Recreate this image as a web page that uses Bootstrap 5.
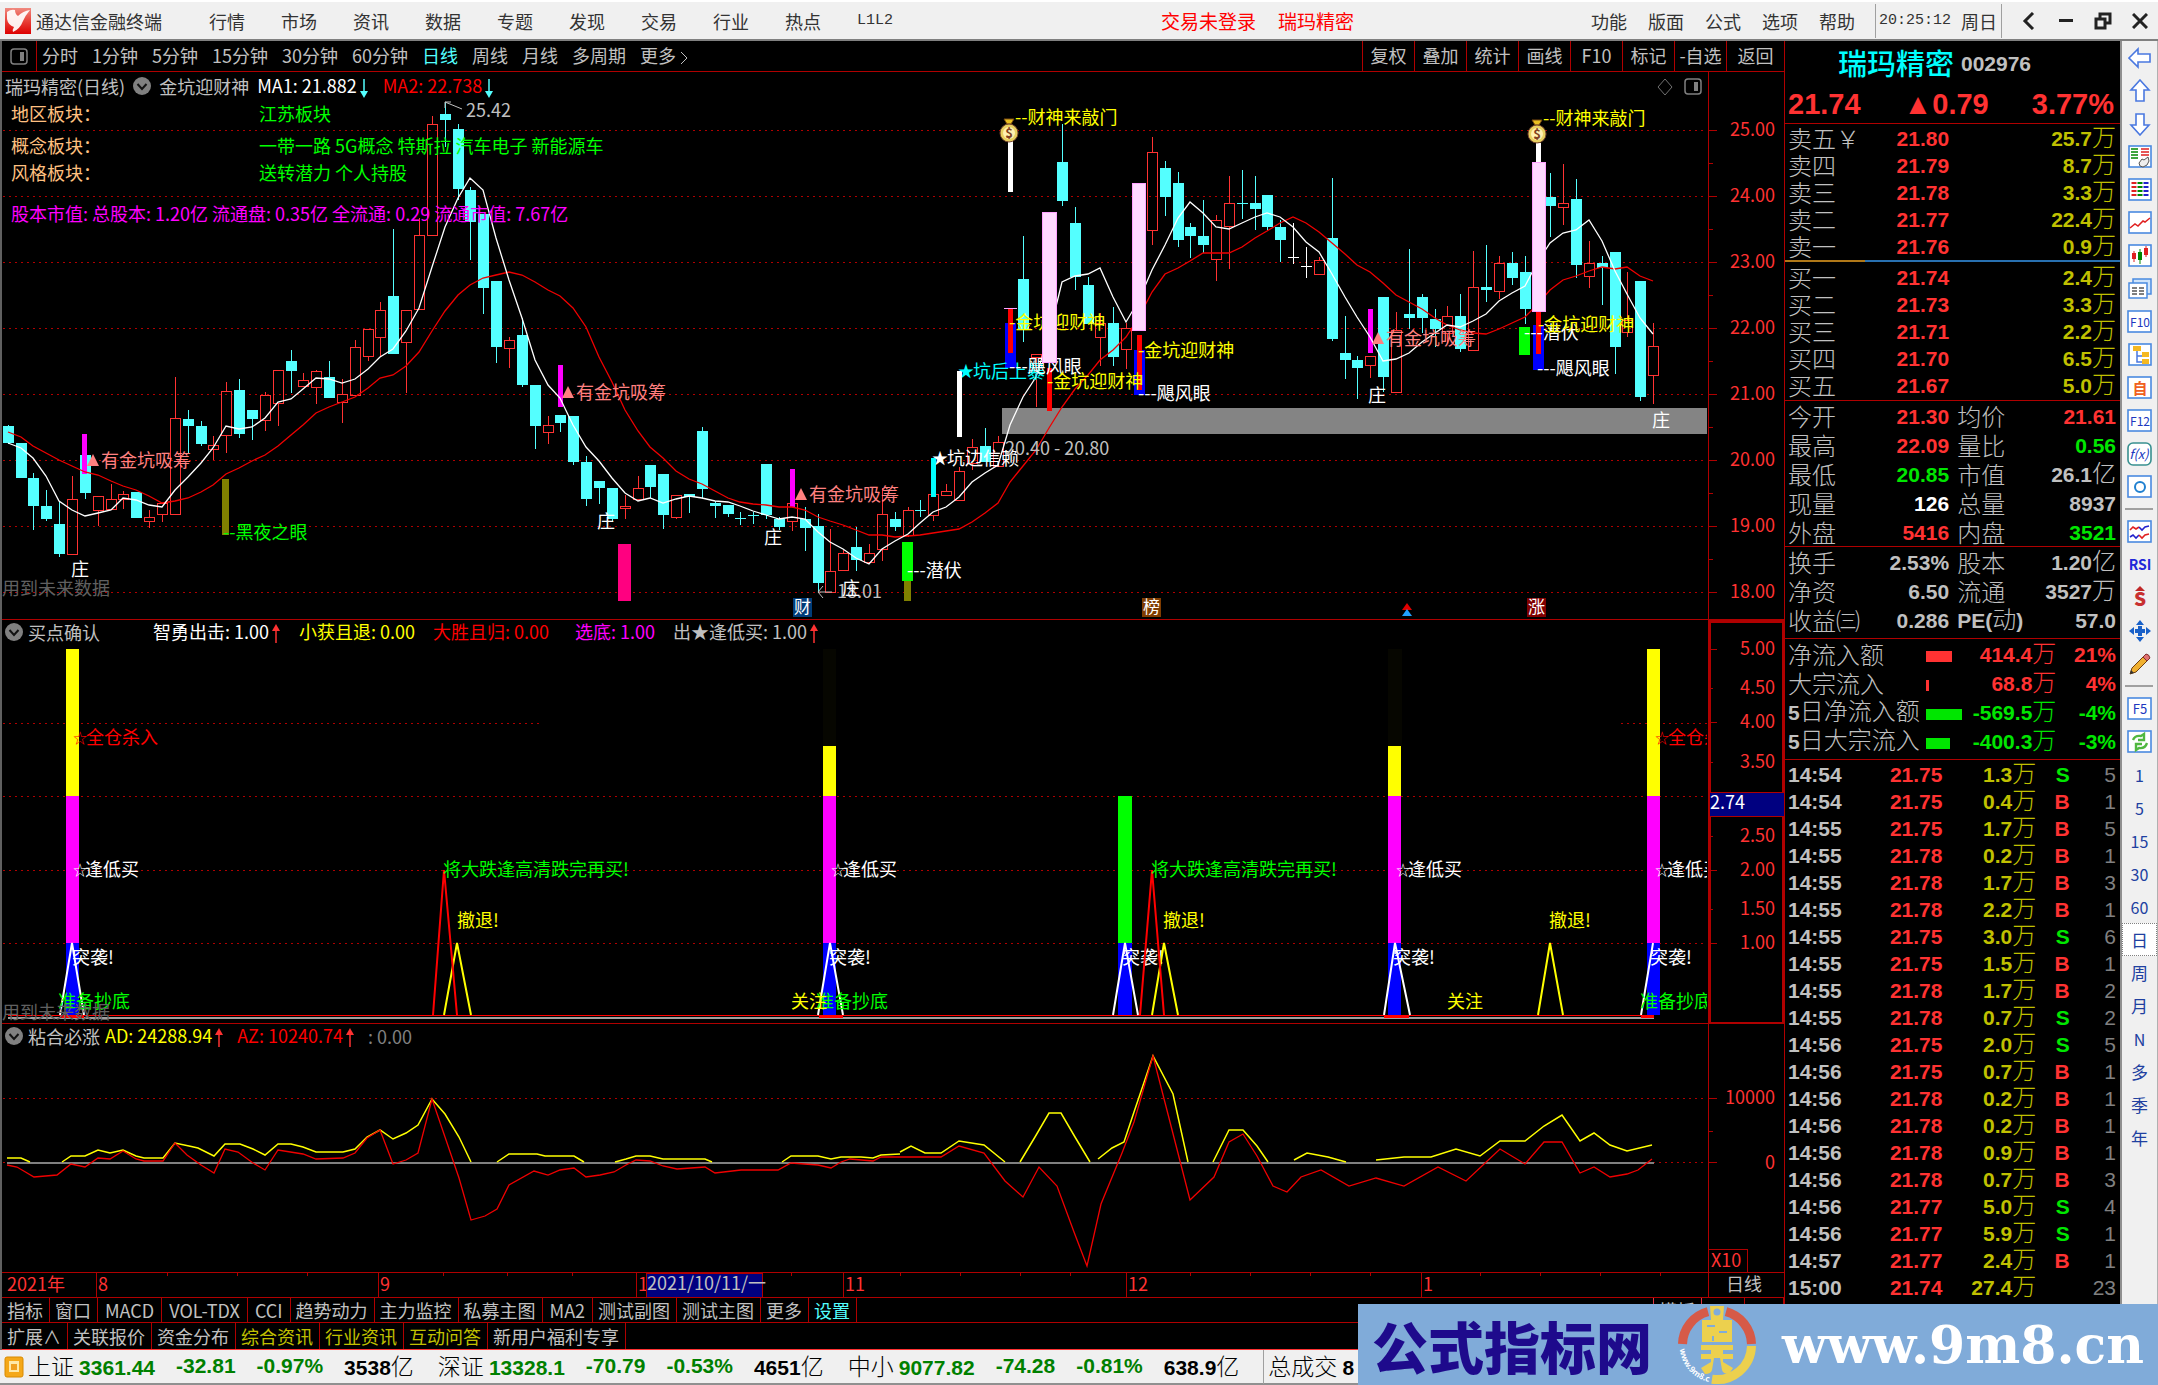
<!DOCTYPE html>
<html lang="zh-CN">
<head>
<meta charset="utf-8">
<meta name="viewport" content="width=device-width, initial-scale=1">
<title>通达信金融终端</title>
<link href="https://cdn.jsdelivr.net/npm/bootstrap@5.3.0/dist/css/bootstrap.min.css" rel="stylesheet">
<style>
:root{--line:#b00000;--up:#ff3232;--down:#00e600;--txt:#c0c0c0;--vol:#c0c000}
body{background:#000;color:var(--txt);font-family:"Noto Sans CJK SC",sans-serif;font-size:18px;font-weight:400;line-height:24px}
a{color:inherit;text-decoration:none}
button{font:inherit;color:inherit;background:none;border:0;padding:0}
.titlebar{background:#f0f0f0;color:#333;height:41px;border-top:2px solid #fff;border-bottom:2px solid #808080;padding-left:5px}
.appname{margin-left:5px}
.titlebar nav{gap:36px;margin-left:47px}
.notice{color:#f00;font-size:19px;gap:22px;margin-left:268px}
.opts{gap:21px}
.mono{font-family:"Liberation Mono","Noto Sans CJK SC",monospace;font-size:15px}
.vsep{width:1px;height:34px;background:#a0a0a0}
.clock{gap:10px;padding:0 4px 0 3px}
.winbtn{width:37px;height:36px;display:flex;align-items:center;justify-content:center}
.workspace{border-left:2px solid #606060;min-width:0}
.periods{height:31px;border-bottom:1px solid var(--line);line-height:29px}
.periods .pane-toggle{width:35px;height:30px;border-right:1px solid var(--line)}
.period-list{gap:14px;padding-left:5px}
.tools a{border-left:1px solid var(--line);width:52px;text-align:center;height:30px}
.tools a:last-child{width:58px}
.pane svg.plot{display:block;width:100%;height:auto}
.legend{top:0;left:3px;gap:5px;line-height:22px;white-space:nowrap}
.legend-main{top:2px;gap:8px}
.legend .group{gap:18px}
.white{color:#fff}.yellow{color:#ff0}.mag{color:#f0f}.redtxt{color:#f00}.aqua{color:#54ffff}.olive{color:var(--vol)}
.tabs a{border-right:1px solid var(--line);padding:0 6px 0 5px}
.tabs a.latin{padding:0 7px}
.tabs{border-top:1px solid var(--line);white-space:nowrap}
.tabs-one{height:25px;line-height:24px}
.tabs-two{height:28px;line-height:26px;border-bottom:1px solid var(--up)}
.quote{width:336px;border-left:1px solid var(--line);flex:none}
.quote table{width:100%;table-layout:fixed;border-collapse:collapse;font-size:24px;line-height:20px}
.quote td,.quote th{padding:0;white-space:nowrap;font-weight:300;overflow:visible}
.quote th{padding-left:3px}
.quote .val{text-align:right}
.quote b,.status b{font-family:"Liberation Sans",sans-serif;font-size:21px;font-weight:700}
.book tr,.trades tr{height:27px}
.stats tr,.flows tr{height:29px}
.edge{padding-right:4px!important}
.qhead{height:83px;border-bottom:1px solid var(--line)}
.qname{font-size:29px;font-weight:500;line-height:38px;gap:7px;padding-right:36px}
.qprice{font-family:"Liberation Sans",sans-serif;font-size:29px;font-weight:700;line-height:42px;padding:0 6px 0 3px}
.split{height:2px;margin:1px 0;background:linear-gradient(90deg,#b07818 24%,#2870b0 24%)}
.bids{padding-bottom:2px}
.rule-top{border-top:1px solid var(--line)}
.up{color:var(--up)}.down{color:var(--down)}.dim{color:#808080}
.flowbar{display:inline-block;height:11px;background:currentColor;vertical-align:middle}
.rail{width:38px;background:#f0f0f0;border-left:2px solid #909090;border-right:1px solid #b0b0b0;flex:none;color:#2040a0;font-size:17px}
.rail a{height:33px;display:flex;align-items:center;justify-content:center}
.rail hr{margin:5px 3px;border-top:2px solid #a0a0a0;opacity:1;width:28px}
.rail .chosen{background:#fff;border:1px dotted #808080}
.rail .num{font-size:16px}
.status{background:#f0f0f0;color:#000;height:35px;border-bottom:2px solid #909090;font-size:23px;font-weight:300;line-height:33px;white-space:nowrap;padding-left:4px}
.status .idx{gap:21px;margin-right:24px}
.status b{color:#008000}
.status .blk{color:#000}
.brand{right:0;bottom:0;width:800px;height:81px;background:#80abd9;color:#fff;padding:0 14px}
.brand .cn{font-size:56px;font-weight:900;line-height:81px;color:#1e0a8c}
.brand .url{font-family:"DejaVu Serif",serif;font-weight:700;font-size:52px;line-height:81px}
svg text{font-family:"Noto Sans CJK SC",sans-serif}
</style>
<script src="https://cdn.jsdelivr.net/npm/bootstrap@5.3.0/dist/js/bootstrap.bundle.min.js"></script>
</head>
<body>
<div class="position-relative d-flex flex-column min-vh-100">
<header class="titlebar d-flex align-items-center">
  <svg width="26" height="26" viewBox="0 0 26 26"><defs><linearGradient id="lg" x2="0" y2="1"><stop offset="0" stop-color="#f08a80"/><stop offset=".5" stop-color="#e84038"/><stop offset="1" stop-color="#d00"/></linearGradient></defs><rect width="26" height="26" fill="url(#lg)"/><path d="M2 4q4-3 8-2 0 4 3 6 5-5 12-6-5 6-7 11-3 8-10 11-1-2 1-5-6-2-7-8 0-4 0-7z" fill="#fff" opacity=".92"/></svg>
  <span class="appname">通达信金融终端</span>
  <nav class="d-flex align-items-center"><a href="#">行情</a><a href="#">市场</a><a href="#">资讯</a><a href="#">数据</a><a href="#">专题</a><a href="#">发现</a><a href="#">交易</a><a href="#">行业</a><a href="#">热点</a><a href="#" class="mono">L1L2</a></nav>
  <div class="notice d-flex"><a href="#">交易未登录</a><a href="#">瑞玛精密</a></div>
  <div class="ms-auto d-flex align-items-center">
    <div class="opts d-flex pe-3 me-1"><a href="#">功能</a><a href="#">版面</a><a href="#">公式</a><a href="#">选项</a><a href="#">帮助</a></div>
    <span class="vsep"></span>
    <div class="clock d-flex align-items-center"><span class="mono">20:25:12</span><span>周日</span></div>
    <span class="vsep me-2"></span>
    <button class="winbtn" aria-label="back"><svg width="14" height="18" fill="none" stroke="#222" stroke-width="3"><path d="M11 1L3 9l8 8"/></svg></button>
    <button class="winbtn" aria-label="minimize"><svg width="14" height="4"><rect width="14" height="3" fill="#222"/></svg></button>
    <button class="winbtn" aria-label="restore"><svg width="18" height="18" fill="none" stroke="#222" stroke-width="3"><path d="M6 6V2h10v9h-4M2 7h9v9H2z"/></svg></button>
    <button class="winbtn" aria-label="close"><svg width="16" height="16" fill="none" stroke="#222" stroke-width="3"><path d="M1 1l14 14M15 1L1 15"/></svg></button>
  </div>
</header>

<main class="d-flex">
<section class="workspace flex-grow-1">
  <div class="periods d-flex">
    <button class="pane-toggle d-flex align-items-center justify-content-center" aria-label="pane"><svg width="18" height="17"><rect x="1" y="1" width="16" height="15" rx="3" fill="none" stroke="#808080" stroke-width="1.5"/><rect x="10" y="4" width="4" height="9" fill="#808080"/></svg></button>
    <nav class="period-list d-flex"><a href="#">分时</a><a href="#">1分钟</a><a href="#">5分钟</a><a href="#">15分钟</a><a href="#">30分钟</a><a href="#">60分钟</a><a href="#" class="aqua">日线</a><a href="#">周线</a><a href="#">月线</a><a href="#">多周期</a><a href="#">更多 <svg width="8" height="14" fill="none" stroke="#c0c0c0"><path d="M1 1l6 6-6 6"/></svg></a></nav>
    <nav class="tools d-flex ms-auto"><a href="#">复权</a><a href="#">叠加</a><a href="#">统计</a><a href="#">画线</a><a href="#">F10</a><a href="#">标记</a><a href="#">-自选</a><a href="#">返回</a></nav>
  </div>

  <div class="pane position-relative">
    <div class="legend legend-main position-absolute d-flex align-items-center">
      <span>瑞玛精密(日线)</span>
      <svg width="18" height="18"><use href="#fold"/></svg>
      <span>金坑迎财神</span>
      <span class="white">MA1: 21.882<svg width="14" height="20"><use href="#dn"/></svg></span>
      <span class="redtxt ms-1">MA2: 22.738<svg width="14" height="20"><use href="#dn"/></svg></span>
    </div>
    <svg class="plot" id="kline" viewBox="2 72 1782 548"></svg>
  </div>

  <div class="pane position-relative">
    <div class="legend position-absolute d-flex align-items-center">
      <svg width="18" height="18"><use href="#fold"/></svg>
      <span>买点确认</span>
      <span class="group d-flex ms-5"><span class="white">智勇出击: 1.00<svg width="12" height="20"><use href="#upa"/></svg></span><span class="yellow">小获且退: 0.00</span><span class="redtxt">大胜且归: 0.00</span><span class="mag ms-2">选底: 1.00</span><span>出★逢低买: 1.00<svg width="12" height="20"><use href="#upa"/></svg></span></span>
    </div>
    <svg class="plot" id="signal" viewBox="2 620 1782 404"></svg>
  </div>

  <div class="pane position-relative">
    <div class="legend position-absolute d-flex align-items-center">
      <svg width="18" height="18"><use href="#fold"/></svg>
      <span>粘合必涨</span>
      <span class="yellow">AD: 24288.94<svg width="12" height="20"><use href="#upa"/></svg></span>
      <span class="redtxt ms-2">AZ: 10240.74<svg width="12" height="20"><use href="#upa"/></svg></span>
      <span class="dim ms-2">: 0.00</span>
    </div>
    <svg class="plot" id="adaz" viewBox="2 1024 1782 273"></svg>
  </div>

  <nav class="tabs tabs-one d-flex"><a href="#">指标</a><a href="#">窗口</a><a href="#" class="latin">MACD</a><a href="#" class="latin">VOL-TDX</a><a href="#" class="latin">CCI</a><a href="#">趋势动力</a><a href="#">主力监控</a><a href="#">私募主图</a><a href="#" class="latin">MA2</a><a href="#">测试副图</a><a href="#">测试主图</a><a href="#">更多</a><a href="#" class="aqua">设置</a><a href="#" class="ms-auto border-start border-danger">模板</a><a href="#" class="px-3">+</a><a href="#" class="px-3">-</a></nav>
  <nav class="tabs tabs-two d-flex"><a href="#">扩展∧</a><a href="#">关联报价</a><a href="#">资金分布</a><a href="#" class="olive">综合资讯</a><a href="#" class="olive">行业资讯</a><a href="#" class="olive">互动问答</a><a href="#">新用户福利专享</a></nav>
</section>

<aside class="quote">
  <div class="qhead">
    <div class="qname d-flex justify-content-center align-items-center"><span style="color:#00ffff">瑞玛精密</span><b class="pt-1">002976</b></div>
    <div class="qprice up d-flex justify-content-between"><span>21.74</span><span>▲0.79</span><span>3.77%</span></div>
  </div>
  <table class="book"><colgroup><col style="width:30%"><col style="width:19%"><col></colgroup><tbody id="asks"></tbody></table>
  <div class="split"></div>
  <div class="bids"><table class="book"><colgroup><col style="width:30%"><col style="width:19%"><col></colgroup><tbody id="bids"></tbody></table></div>
  <div class="rule-top">
  <table class="stats"><colgroup><col style="width:25%"><col style="width:24%"><col style="width:24%"><col></colgroup><tbody>
    <tr><th>今开</th><td class="val up"><b>21.30</b></td><th class="ps-2">均价</th><td class="val up edge"><b>21.61</b></td></tr>
    <tr><th>最高</th><td class="val up"><b>22.09</b></td><th class="ps-2">量比</th><td class="val down edge"><b>0.56</b></td></tr>
    <tr><th>最低</th><td class="val down"><b>20.85</b></td><th class="ps-2">市值</th><td class="val edge"><b>26.1</b>亿</td></tr>
    <tr><th>现量</th><td class="val white"><b>126</b></td><th class="ps-2">总量</th><td class="val edge"><b>8937</b></td></tr>
    <tr><th>外盘</th><td class="val up"><b>5416</b></td><th class="ps-2">内盘</th><td class="val down edge"><b>3521</b></td></tr>
  </tbody></table></div>
  <div class="rule-top pb-1">
  <table class="stats"><colgroup><col style="width:25%"><col style="width:24%"><col style="width:24%"><col></colgroup><tbody>
    <tr><th>换手</th><td class="val"><b>2.53%</b></td><th class="ps-2">股本</th><td class="val edge"><b>1.20</b>亿</td></tr>
    <tr><th>净资</th><td class="val"><b>6.50</b></td><th class="ps-2">流通</th><td class="val edge"><b>3527</b>万</td></tr>
    <tr><th>收益㈢</th><td class="val"><b>0.286</b></td><th class="ps-2"><b>PE(</b>动<b>)</b></th><td class="val edge"><b>57.0</b></td></tr>
  </tbody></table></div>
  <div class="rule-top pb-1">
  <table class="flows"><colgroup><col style="width:42%"><col style="width:12%"><col style="width:27%"><col></colgroup><tbody>
    <tr class="up"><th style="color:var(--txt)">净流入额</th><td><i class="flowbar" style="width:26px"></i></td><td class="val"><b>414.4</b>万</td><td class="val edge"><b>21%</b></td></tr>
    <tr class="up"><th style="color:var(--txt)">大宗流入</th><td><i class="flowbar" style="width:3px"></i></td><td class="val"><b>68.8</b>万</td><td class="val edge"><b>4%</b></td></tr>
    <tr class="down"><th style="color:var(--txt)"><b>5</b>日净流入额</th><td><i class="flowbar" style="width:36px"></i></td><td class="val"><b>-569.5</b>万</td><td class="val edge"><b>-4%</b></td></tr>
    <tr class="down"><th style="color:var(--txt)"><b>5</b>日大宗流入</th><td><i class="flowbar" style="width:24px"></i></td><td class="val"><b>-400.3</b>万</td><td class="val edge"><b>-3%</b></td></tr>
  </tbody></table></div>
  <div class="rule-top">
  <table class="trades"><colgroup><col style="width:25%"><col style="width:22%"><col style="width:28%"><col style="width:10%"><col></colgroup><tbody id="trades"></tbody></table></div>
</aside>

<nav class="rail">
  <a href="#" aria-label="左"><svg width="24" height="22" fill="#fff" stroke="#4a78e0" stroke-width="1.6"><path d="M1 11L10 2v5h12v8H10v5z"/></svg></a>
  <a href="#" aria-label="上"><svg width="22" height="24" fill="#fff" stroke="#4a78e0" stroke-width="1.6"><path d="M11 1l9 10h-5v11H7V11H2z"/></svg></a>
  <a href="#" aria-label="下"><svg width="22" height="24" fill="#fff" stroke="#4a78e0" stroke-width="1.6"><path d="M11 23l9-10h-5V2H7v11H2z"/></svg></a>
  <a href="#" aria-label="定制"><svg width="24" height="24"><use href="#tile"/><path d="M3 4h7M3 7h7M3 10h7M3 13h7" stroke="#080" stroke-width="1.5"/><path d="M13 4h8M13 7h8M13 10h8" stroke="#e02020" stroke-width="1.5"/><path d="M20 12l-4 3-2-1-3 4q0 4 4 4 5-1 6-6z" fill="#eee" stroke="#555"/></svg></a>
  <a href="#" aria-label="报价"><svg width="24" height="24"><use href="#tile"/><g stroke-width="5" stroke-dasharray="2 2"><path d="M6 4v16" stroke="#e02020"/><path d="M12 4v16" stroke="#080"/><path d="M18 4v16" stroke="#22c"/></g></svg></a>
  <a href="#" aria-label="分时"><svg width="24" height="24"><use href="#tile"/><path d="M2 17l5-4 3 2 5-5 2 1 5-4" fill="none" stroke="#e02020" stroke-width="1.5"/></svg></a>
  <a href="#" aria-label="K线"><svg width="24" height="24"><use href="#tile"/><path d="M6 7v11M18 2v11" stroke="#e02020"/><path d="M12 5v15" stroke="#080"/><path d="M4 9h4v6H4zM16 4h4v7h-4z" fill="#e02020"/><path d="M10 8h4v8h-4z" fill="#080"/></svg></a>
  <a href="#" aria-label="资料"><svg width="26" height="24"><path d="M6 2h18v15H6z" fill="#cfe4fa" stroke="#4a8ae0" stroke-width="1.5"/><path d="M2 6h18v15H2z" fill="#fff" stroke="#4a8ae0" stroke-width="1.5"/><path d="M5 11h5M12 11h5M5 14h5M12 14h5M5 17h5M12 17h5" stroke="#555" stroke-width="1.5"/></svg></a>
  <a href="#"><svg width="26" height="24"><use href="#tilew"/><text x="13" y="17" font-size="12" text-anchor="middle" fill="#2038c0">F10</text></svg></a>
  <a href="#" aria-label="树"><svg width="24" height="24"><use href="#tile"/><path d="M9 8v11h6M9 13h6" fill="none" stroke="#4a78e0" stroke-width="1.5"/><path d="M5 3h8v5H5zM14 9h7v5h-7zM14 16h7v5h-7z" fill="#f5b820"/></svg></a>
  <a href="#"><svg width="26" height="24"><use href="#tilew"/><text x="13" y="18" font-size="15" font-weight="700" text-anchor="middle" fill="#f06020">自</text></svg></a>
  <a href="#"><svg width="26" height="24"><use href="#tilew"/><text x="13" y="17" font-size="12" text-anchor="middle" fill="#2038c0">F12</text></svg></a>
  <a href="#"><svg width="26" height="24"><rect x="1" y="1" width="23" height="22" rx="5" fill="#fff" stroke="#389090" stroke-width="1.6"/><text x="12" y="17" font-size="13" font-style="italic" text-anchor="middle" fill="#2038c0">f(x)</text></svg></a>
  <a href="#" aria-label="圆"><svg width="26" height="24"><use href="#tilew"/><circle cx="13" cy="12" r="5" fill="none" stroke="#2080d0" stroke-width="2"/></svg></a>
  <hr>
  <a href="#" aria-label="指标"><svg width="26" height="24"><use href="#tilew"/><path d="M3 10l3-3 3 2 3-2" fill="none" stroke="#e02020" stroke-width="1.6"/><path d="M12 7l3 3 3-3 4-1" fill="none" stroke="#22c" stroke-width="1.6"/><path d="M3 17l3-2 3 3 3-3" fill="none" stroke="#22c" stroke-width="1.6"/><path d="M12 15l3 3 3-3 4-1" fill="none" stroke="#e02020" stroke-width="1.6"/></svg></a>
  <a href="#"><svg width="28" height="24"><text x="14" y="17" font-size="14" font-weight="700" text-anchor="middle" fill="#2028d8">RSI</text></svg></a>
  <a href="#"><svg width="22" height="30"><path d="M11 3l5 5H6z" fill="#c02828"/><text x="11" y="23" font-size="19" font-weight="900" text-anchor="middle" fill="#c83030">S</text></svg></a>
  <a href="#" aria-label="移动"><svg width="24" height="24" fill="#1860c8"><path d="M12 1l4 5H8zM12 23l4-5H8zM1 12l5-4v8zM23 12l-5-4v8z"/><path d="M12 7v10M7 12h10" stroke="#1860c8" stroke-width="4"/></svg></a>
  <a href="#" aria-label="画笔"><svg width="24" height="24"><path d="M2 22l2-6L15 5l4 4L8 20z" fill="#f0b030" stroke="#704010"/><path d="M15 5l3-3q3 0 4 4l-3 3z" fill="#e07070" stroke="#803030"/><path d="M2 22l1-4 3 3z" fill="#333"/></svg></a>
  <hr>
  <a href="#"><svg width="26" height="24"><use href="#tilew"/><text x="13" y="17" font-size="13" text-anchor="middle" fill="#2038c0">F5</text></svg></a>
  <a href="#" aria-label="刷新"><svg width="26" height="24"><use href="#tilew"/><path d="M6 10q2-5 8-4l3-2v6h-6M20 13q-2 6-8 5l-3 2v-6h6" fill="none" stroke="#50b840" stroke-width="2.4"/></svg></a>
  <a href="#" class="num">1</a><a href="#" class="num">5</a><a href="#" class="num">15</a><a href="#" class="num">30</a><a href="#" class="num">60</a>
  <a href="#" class="chosen">日</a><a href="#">周</a><a href="#">月</a><a href="#" class="num">N</a><a href="#">多</a><a href="#">季</a><a href="#">年</a>
</nav>
</main>

<footer class="status d-flex align-items-center">
  <svg width="20" height="22" class="me-1"><rect x="1" y="1" width="18" height="20" rx="2" fill="#f5a818" stroke="#d88a00"/><rect x="5" y="5" width="10" height="11" fill="#ffe9a8"/><rect x="7" y="8" width="6" height="6" fill="#f0a020"/></svg>
  <div class="idx d-flex"><span>上证 <b>3361.44</b></span><b>-32.81</b><b>-0.97%</b><span><b class="blk">3538</b>亿</span></div>
  <div class="idx d-flex"><span>深证 <b>13328.1</b></span><b>-70.79</b><b>-0.53%</b><span><b class="blk">4651</b>亿</span></div>
  <div class="idx d-flex"><span>中小 <b>9077.82</b></span><b>-74.28</b><b>-0.81%</b><span><b class="blk">638.9</b>亿</span></div>
  <span class="vsep me-1"></span><span>总成交 <b class="blk">8</b></span>
</footer>

<div class="brand position-absolute d-flex align-items-center justify-content-between">
  <span class="cn">公式指标网</span>
  <svg width="80" height="80" viewBox="-40 -40 80 80"><path d="M-34.500-1A34.500 34.500 0 0 1-9-33.300M9-33.300A34.500 34.500 0 0 1 34.500-1" fill="none" stroke="#d65a48" stroke-width="9"/><path d="M34.500 1A34.500 34.500 0 0 1-5 34.200" fill="none" stroke="#ecd04e" stroke-width="9"/><path id="ring" d="M-37 4A37 37 0 0 0-8 37" fill="none"/><text font-size="8" font-weight="700" fill="#fff"><textPath href="#ring" startOffset="0">www.9m8.cn</textPath></text><g fill="#ecd04e"><path d="M-7-39H7l-1 14h9v22h-30v-22h9z"/><path d="M-16 0h32v5H6v4h10v5H6v3l10 6-4 6q-6 0-7-4L3 13h-6l-2 12q-1 4-7 4l-4-6 10-6v-3h-10v-5h10V5h-10z"/></g><path d="M-10-19h8M2-13h8M-4-9v5" stroke="#80abd9" stroke-width="2"/><circle cy="-33" r="3.500" fill="#80abd9"/></svg>
  <span class="url">www.9m8.cn</span>
</div>
</div>

<svg width="0" height="0" class="position-absolute"><defs>
  <g id="fold"><circle cx="9" cy="9" r="9" fill="#808080"/><path d="M4.500 7l4.500 5 4.500-5" fill="none" stroke="#111" stroke-width="2"/></g>
  <g id="dn"><path d="M7 1v13" stroke="#54ffff" stroke-width="1.500"/><path d="M7 20l-4-7h8z" fill="#54ffff"/></g>
  <g id="upa"><path d="M7 5v14" stroke="#ff3232" stroke-width="1.500"/><path d="M7 0l-4 7h8z" fill="#ff3232"/></g>
  <rect id="tile" x="1" y="1" width="22" height="21" fill="#fff" stroke="#4a8ae0" stroke-width="1.600"/>
  <rect id="tilew" x="1" y="1" width="23" height="21" fill="#fff" stroke="#4a8ae0" stroke-width="1.600"/>
  <g id="bag"><path d="M5 0h10l-3 5h-4z" fill="#e8c020" stroke="#7a4a10"/><circle cx="10" cy="14" r="9" fill="#e8d060" stroke="#7a4a30"/><circle cx="10" cy="14" r="6" fill="#fff0b0"/></g>
</defs></svg>

<script>
const UP='#ff3232',DN='#54ffff',GRID='#b00000';
const esc=s=>s.replace(/&/g,'&amp;');
const rect=(x,y,w,h,f,s)=>`<rect x="${x}" y="${y}" width="${w}" height="${h}" fill="${f}"${s?` stroke="${s}"`:''} shape-rendering="crispEdges"/>`;
const line=(x1,y1,x2,y2,c,e='')=>`<path d="M${x1} ${y1}L${x2} ${y2}" stroke="${c}" fill="none" ${e}/>`;
const text=(x,yc,s,c,size=18,e='')=>`<text x="${x}" y="${Math.round(yc+size*.36)}" font-size="${size}" fill="${c}" ${e}>${esc(s)}</text>`;
const crisp='shape-rendering="crispEdges"';
const dots=(y,a=3,b=1707)=>line(a,y+.5,b,y+.5,GRID,'stroke-dasharray="2 4" '+crisp);
const poly=(pts,c,w=1)=>`<polyline points="${pts.map(p=>p.join()).join(' ')}" fill="none" stroke="${c}" stroke-width="${w}"/>`;
const cx=i=>Math.round(7.7+12.855*i);

/* daily candles: kind (c down, r up, w flat), high, body top, body bottom, low */
const bars=`0c425,426,443,444 1c443,443,478,478 2c473,478,506,530 3c490,506,519,521 4c501,524,554,557 5r476,499,554,554 6c455,455,493,499 7r496,496,510,526 8r484,499,509,509 9r491,494,499,509 10c492,492,518,518 11r510,517,521,528 12r503,503,514,522 13r377,418,514,514 14c410,419,426,453 15c421,426,444,446 16r436,445,449,460 17r382,391,435,453 18c379,390,434,438 19c410,410,419,440 20r392,395,420,431 21r370,370,403,426 22c350,361,371,393 23r373,380,386,386 24r370,371,387,404 25c361,377,398,398 26r379,394,402,423 27r340,347,395,395 28r329,329,356,361 29r302,310,337,357 30c229,296,354,354 31r310,310,342,393 32r218,235,309,309 33r116,124,235,235 34c102,114,120,147 35c124,129,189,200 36c187,190,222,260 37c214,214,288,314 38c281,281,347,363 39r337,340,348,368 40c318,335,385,387 41c385,385,426,449 42r416,425,432,444 43c415,415,423,432 44c416,416,462,465 45c456,462,499,506 46c481,481,488,504 47c488,488,519,521 48r495,506,508,519 49r476,488,499,499 50c465,465,487,498 51c474,474,515,529 52r495,495,517,519 53c494,494,497,513 54c427,431,489,498 55c501,503,506,518 56c505,505,514,517 57c512,518,519,525 58c512,515,516,524 59c464,464,515,519 60c517,519,527,530 61r503,503,521,531 62c507,519,528,551 63c514,526,583,593 64r529,571,592,592 65r550,553,570,570 66c527,547,560,571 67r544,553,562,562 68r488,514,549,561 69c512,519,527,531 70r507,510,535,537 71c500,510,511,517 72r494,494,515,521 73r484,491,495,495 74r467,471,500,500 75r439,447,463,470 76c428,446,462,462 77r436,442,466,466 79c236,279,330,342 80r354,354,357,407 82c124,162,201,206 83c207,223,277,290 84c277,285,324,324 85r313,323,337,366 86c307,323,357,366 87r323,328,349,369 89r137,152,230,245 90c161,168,197,216 91c172,183,240,247 92c223,227,236,258 93c200,236,245,253 94r215,220,259,281 95r176,203,226,269 96c170,203,204,219 97c176,203,209,230 98c195,195,227,230 99c220,227,240,262 100w223,257,258,264 101w247,266,267,278 102r257,260,274,274 103c178,238,339,341 104c316,353,360,379 105c356,360,368,399 106r356,356,365,378 107c297,297,377,392 108r312,330,392,392 109c249,314,318,329 110c294,297,318,333 111c309,319,329,347 112r306,316,333,343 113c294,316,349,352 114r251,287,350,350 115c245,287,290,302 116r256,263,291,299 117c252,263,278,285 118c256,272,309,324 120c173,197,206,237 121r164,203,207,225 122c179,199,265,278 123r241,263,276,288 124c256,263,268,305 125c252,252,347,374 126r272,320,332,337 127c281,281,397,401 128r323,346,375,404`;
const candle=b=>{const m=b.match(/^(\d+)([crw])(.+)$/),x=cx(+m[1]),[h,t,l,lo]=m[3].split(',').map(Number);
  const c=m[2]=='c'?DN:m[2]=='r'?UP:'#fff';
  const wick=m[2]=='r'?line(x+.5,h,x+.5,t,c,crisp)+line(x+.5,l,x+.5,lo,c,crisp):line(x+.5,h,x+.5,lo,c,crisp);
  return wick+(m[2]=='r'?rect(x-4.5,t+.5,10,Math.max(1,l-t),'none',c):rect(x-5,t,11,Math.max(1,l-t),c));};
const ma1=[443,448,458,476,501,510,516,513,510,498,500,505,507,490,477,463,448,426,429,427,418,402,399,389,378,379,383,379,369,357,349,331,308,267,227,198,178,190,238,280,318,360,385,398,425,447,461,478,493,501,498,503,499,496,498,501,502,506,511,515,519,517,519,532,542,549,558,564,549,541,534,523,512,507,497,482,473,465,425,397,377,335,282,276,274,268,297,322,300,270,245,218,202,213,227,229,223,217,213,217,227,242,252,274,297,317,337,361,359,353,342,333,325,327,321,314,301,293,286,263,243,233,230,220,241,271,294,318,334];
const ma2=[432,437,446,453,460,466,472,475,481,486,490,496,503,501,498,492,485,474,468,461,455,446,435,425,413,407,402,397,388,378,375,366,352,331,311,295,285,278,275,272,275,282,290,296,308,327,357,382,410,431,447,458,471,479,484,491,498,502,504,505,507,507,510,517,521,525,530,535,535,537,536,535,533,531,529,522,513,503,482,466,450,428,407,389,375,360,350,337,317,292,274,268,261,253,253,253,247,238,231,223,217,223,232,243,254,265,272,283,295,302,309,318,325,330,333,334,329,323,317,305,290,280,276,271,267,269,267,276,281];
const ORG='#ffc080',LIME='#00ff00',MAG='#ff00ff',YEL='#ffff00',CORAL='#ff8080',GRY='#c0c0c0';
const tri=(x,yc)=>`<path d="M${x} ${yc+5}l6-12 6 12z" fill="${CORAL}"/>`;
let k='';
for(let y=130;y<600;y+=66)k+=dots(y);
k+=rect(1002,408,705,26,'#848484');
k+=bars.split(' ').map(candle).join('');
k+=rect(82,434,5,40,MAG)+rect(558,365,5,42,MAG)+rect(790,469,5,38,MAG)+rect(1368,309,5,44,MAG);
k+=rect(222,479,7,56,'#808000')+rect(618,544,13,57,'#ff0080')+rect(902,542,11,39,'#00ff00')+rect(904,581,7,20,'#808000');
k+=rect(931,458,5,39,'#00ffff')+rect(957,371,5,66,'#fff')+rect(1008,141,5,51,'#fff')+rect(1536,143,5,20,'#fff');
k+=rect(1005,323,11,45,'#0000ff')+rect(1008,309,5,44,'#f00')+rect(1004,308,13,1,'#ffa0ff')+rect(1134,350,11,45,'#0000ff')+rect(1137,335,5,55,'#f00')+rect(1047,368,5,43,'#f00');
k+=rect(1519,327,11,28,'#00ff00')+rect(1533,325,11,45,'#0000ff')+rect(1536,311,5,43,'#f00');
k+=poly(ma2.map((y,i)=>[cx(i),y]),'#f00000',1.3)+poly(ma1.map((y,i)=>[cx(i),y]),'#ffffff',1.3);
k+=text(1009,323,'-金坑迎财神',YEL)+text(1524,333,'---潜伏','#fff')+text(1538,325,'-金坑迎财神',YEL)+text(973,372,'坑后上暴','#00ffff')+text(958,371,'★','#00ffff',16)+text(1009,367,'---飓风眼','#fff');
k+=rect(1042,212,14,150,'#ffd8ff','#ffa0ff')+rect(1132,183,13,147,'#ffd8ff','#ffa0ff')+rect(1532,162,13,149,'#ffd8ff','#ffa0ff');
k+=text(1047,382,'-金坑迎财神',YEL)+text(1138,351,'-金坑迎财神',YEL)+text(1138,394,'---飓风眼','#fff')+text(1537,369,'---飓风眼','#fff');
k+=text(1015,118,'--财神来敲门',YEL)+text(1543,119,'--财神来敲门',YEL);
for(const [x,y] of [[999,119],[1527,120]])k+=`<use href="#bag" x="${x}" y="${y}"/>`+text(x+10,y+14,'$','#804020',13,'text-anchor="middle" font-weight="700"');
k+=text(11,115,'地区板块：',ORG)+text(259,115,'江苏板块',LIME)+text(11,147,'概念板块：',ORG)+text(259,147,'一带一路 5G概念 特斯拉 汽车电子 新能源车',LIME)+text(11,174,'风格板块：',ORG)+text(259,174,'送转潜力 个人持股',LIME)+text(11,215,'股本市值: 总股本: 1.20亿 流通盘: 0.35亿 全流通: 0.29 流通市值: 7.67亿',MAG);
k+=text(466,111,'25.42',GRY)+`<path d="M462 109l-17-7m0 6v-6h6" fill="none" stroke="${GRY}"/>`;
for(const [x,y] of [[87,461],[562,393],[795,495],[1372,339]])k+=tri(x,y)+text(x+14,y,'有金坑吸筹',CORAL);
k+=text(223,533,'--黑夜之眼',LIME)+text(907,571,'---潜伏','#fff')+text(947,459,'坑边信赖','#fff')+text(932,458,'★','#fff',16)+text(1005,449,'20.40 - 20.80',GRY)+text(837,592,'18.01',GRY)+`<path d="M832 592h-14m5-6l-5 6 5 6" fill="none" stroke="${GRY}"/>`;
for(const [x,y] of [[71,570],[597,522],[764,538],[842,589],[1368,396],[1652,421]])k+=text(x,y,'庄','#fff');
k+=text(2,589,'用到未来数据','#606060');
for(const [x,c,s] of [[793,'#003c78','财'],[1142,'#803c00','榜'],[1527,'#800000','涨']])k+=rect(x,598,19,19,c)+text(x+1,607,s,'#fff',17);
k+='<path d="M1407 603l5 7h-10z" fill="#e00000"/><path d="M1407 609l5 7h-10z" fill="#20a0ff"/><path d="M1665 79l7 8-7 8-7-8z" fill="none" stroke="#707070"/><rect x="1685" y="79" width="16" height="15" rx="3" fill="none" stroke="#808080" stroke-width="1.500"/><rect x="1694" y="82" width="4" height="9" fill="#808080"/>';
k+=line(1708.5,72,1708.5,620,GRID,crisp);
for(let i=0;i<8;i++){const y=130+66*i;k+=line(1709,y+.5,1717,y+.5,GRID,crisp)+(i<7?line(1709,y+33.5,1713,y+33.5,GRID,crisp):'')+text(1775,y,(25-i)+'.00',UP,18,'text-anchor="end"');}
k+=line(2,619.5,1784,619.5,GRID,crisp);
kline.innerHTML=k;

/* buy signal pane */
let s='<clipPath id="cp"><rect x="2" y="620" width="1705" height="404"/></clipPath>';
s+=dots(723,3,540)+dots(723,1621)+dots(796)+dots(870)+dots(943);
s+=rect(823,649,13,97,'#060600')+rect(1388,649,14,97,'#060600');
for(const [x,top] of [[66,649],[823,746],[1388,746],[1647,649]])s+=rect(x,top,13,796-top,YEL)+rect(x,796,13,147,MAG)+rect(x,943,13,72,'#0000ff');
s+=rect(1118,796,14,147,LIME)+rect(1118,943,14,72,'#0000ff');
s+=rect(8,1017,1646,2,'#a0a0a0')+rect(8,1015,1646,1,'#f00');
for(const [a,b,c] of [[60,72,84],[818,830,843],[1113,1125,1138],[1384,1395,1410]])s+=poly([[a,1015],[b,943],[c,1015]],'#fff',2);
s+=poly([[1641,1015],[1653,943]],'#fff',2);
for(const [a,w] of [[60,24],[819,24],[1384,25],[1641,13]])s+=rect(a,1015,w,3,'#f00');
for(const x of [72,829,1122,1393,1650])s+=text(x,958,'突袭!','#fff');
for(const [a,b,c] of [[444,457,471],[1152,1164,1178],[1538,1550,1563]])s+=poly([[a,1015],[b,943],[c,1015]],YEL,2);
for(const [a,b,c] of [[433,444,457],[1140,1152,1164]])s+=poly([[a,1015],[b,870],[c,1015]],'#f00',2);
s+='<g clip-path="url(#cp)">';
for(const x of [73,1655])s+=text(x,738,'☆','#f00',14)+text(x+13,738,'全仓杀入','#f00');
for(const x of [73,831,1396,1655])s+=text(x,870,'☆','#fff',14)+text(x+12,870,'逢低买','#fff');
for(const x of [58,816,1640])s+=text(x,1002,'准备抄底',LIME);
s+='</g>';
for(const x of [443,1151])s+=text(x,870,'将大跌逢高清跌完再买!',LIME);
for(const x of [457,1163,1549])s+=text(x,921,'撤退!',YEL);
for(const x of [791,1447])s+=text(x,1002,'关注',YEL);
s+=text(2,1013,'用到未来数据','#606060');
s+=rect(1709,621,74,402,'none',GRID).replace('stroke=','stroke-width="3" stroke=');
[['5.00',649],['4.50',688],['4.00',722],['3.50',762],['2.50',836],['2.00',870],['1.50',909],['1.00',943]].forEach(([t,y])=>{s+=text(1775,y,t,UP,18,'text-anchor="end"')+line(1709,y+.5,1709+(t.endsWith('50')?4:8),y+.5,GRID,crisp)});
s+=rect(1709,792,75,24,'#000080',GRID)+text(1710,803,'2.74','#fff');
s+=line(2,1023.5,1784,1023.5,GRID,crisp);
signal.innerHTML=s;

/* AD / AZ pane */
const sc=(str,kx=1/1.742,oy=1040)=>str.split(' ').map(p=>{const [a,b]=p.split(',').map(Number);return [Math.round(a*kx),Math.round(oy+b/3)]});
let g=dots(1098)+dots(1162)+rect(7,1162,1647,2,'#808080');
g+=['12,354 37,354 53,366','108,366 124,349 148,349 170,330 192,340 215,331 237,348 250,354 284,354 305,309 330,318 345,324 373,349 392,313 418,313 440,328 461,345 484,313 507,313 528,320 550,336 598,336 618,326 640,292 662,270 685,296 708,280 729,256 753,176 775,222 800,290 820,366','866,366 886,341 935,341 950,349 1000,349 1018,366','1072,366 1090,356 1108,349 1132,349 1155,357 1228,357 1240,366','1363,366 1378,349 1425,349 1447,358 1465,350 1500,350 1520,353 1535,346 1568,343'].map(p=>poly(sc(p),YEL,1.5)).join('');
const o2=str=>str.split(' ').map(p=>p.split(',').map(v=>Math.round(v*1.3763)));
g+=['654,837 662,833 672,838 684,838 697,829 715,832 730,844','741,844 752,826 762,809 771,809 781,826 792,844','798,842 808,834 817,830 824,808 838,767 852,795 863,844','881,844 893,821 903,821 913,833 921,844','940,843 950,838 965,841 978,844','1000,843 1020,841 1040,841 1058,835 1075,840 1090,829 1108,829 1122,818 1135,810 1148,829 1158,823 1170,832 1182,836 1200,832'].map(p=>poly(o2(p),YEL,1.5)).join('');
g+=poly(sc('12,376 30,380 60,411 100,404 124,372 148,380 170,354 192,358 215,334 237,358 250,363 284,363 305,309 325,345 350,375 373,398 392,326 415,337 440,370 461,390 484,331 528,341 550,357 598,354 618,340 640,294 662,270 685,372 708,360 729,338 753,176 775,290 800,415 820,540 845,528 865,508 886,436 930,394 955,404 975,390 1000,384 1020,412 1045,404 1070,397 1090,375 1108,360 1132,364 1155,378 1180,386 1228,380 1245,399 1290,391 1355,391 1378,370 1425,376 1447,385 1465,365 1480,358 1520,362 1535,350 1568,352').concat(o2('672,841 684,841 697,833 715,838 730,858 743,870 755,848 768,862 780,895 790,920 800,875 815,838 824,815 838,767 850,815 865,872 882,855 893,830 903,824 913,840 925,862 935,866 945,855 960,850 980,862 1000,856 1020,862 1045,848 1065,858 1090,835 1108,846 1122,830 1135,830 1148,852 1158,848 1170,855 1182,853 1190,850 1200,842')),'#f00000',1.3);
g+=line(2,1272.5,1784,1272.5,GRID,crisp)+line(1708.5,1024,1708.5,1297,GRID,crisp);
g+=line(1709,1098.5,1717,1098.5,GRID)+line(1709,1131.5,1713,1131.5,GRID)+line(1709,1162.5,1717,1162.5,GRID);
g+=text(1775,1098,'10000',UP,18,'text-anchor="end"')+text(1775,1163,'0',UP,18,'text-anchor="end"')+rect(1708.5,1249.5,39,23,'none',GRID)+text(1711,1261,'X10',UP)+text(1726,1285,'日线',GRY);
g+=text(7,1285,'2021年',UP);
for(const [x,t] of [[96,'8'],[378,'9'],[636,'1'],[843,'11'],[1126,'12'],[1421,'1']])g+=line(x+.5,1272,x+.5,1297,GRID,crisp)+text(x+2,1285,t,UP);
for(const x of [167,237,307,443,507,572,791,900,960,1020,1070,1190,1250,1310,1370,1480,1540,1600,1660])g+=line(x+.5,1272,x+.5,1276,GRID,crisp);
g+=rect(646,1273,116,24,'#000080',GRID)+text(647,1284,'2021/10/11/一',GRY);
adaz.innerHTML=g;

/* order book and trades */
const book=(rows)=>rows.map(r=>`<tr><th>${r[0]}</th><td class="val up"><b>${r[1]}</b></td><td class="val olive edge"><b>${r[2]}</b>万</td></tr>`).join('');
asks.innerHTML=book([['卖五￥','21.80','25.7'],['卖四','21.79','8.7'],['卖三','21.78','3.3'],['卖二','21.77','22.4'],['卖一','21.76','0.9']]);
bids.innerHTML=book([['买一','21.74','2.4'],['买二','21.73','3.3'],['买三','21.71','2.2'],['买四','21.70','6.5'],['买五','21.67','5.0']]);
trades.innerHTML=`14:54 75 1.3 S 5|14:54 75 0.4 B 1|14:55 75 1.7 B 5|14:55 78 0.2 B 1|14:55 78 1.7 B 3|14:55 78 2.2 B 1|14:55 75 3.0 S 6|14:55 75 1.5 B 1|14:55 78 1.7 B 2|14:55 78 0.7 S 2|14:56 75 2.0 S 5|14:56 75 0.7 B 1|14:56 78 0.2 B 1|14:56 78 0.2 B 1|14:56 78 0.9 B 1|14:56 78 0.7 B 3|14:56 77 5.0 S 4|14:56 77 5.9 S 1|14:57 77 2.4 B 1|15:00 74 27.4  23`.split('|').map(r=>{const [t,p,v,d,n]=r.split(' ');return `<tr><th><b>${t}</b></th><td class="val up"><b>21.${p}</b></td><td class="val olive"><b>${v}</b>万</td><td class="val ${d=='S'?'down':'up'}"><b>${d}</b></td><td class="val dim edge"><b class="fw-normal">${n}</b></td></tr>`}).join('');
</script>
</body>
</html>
